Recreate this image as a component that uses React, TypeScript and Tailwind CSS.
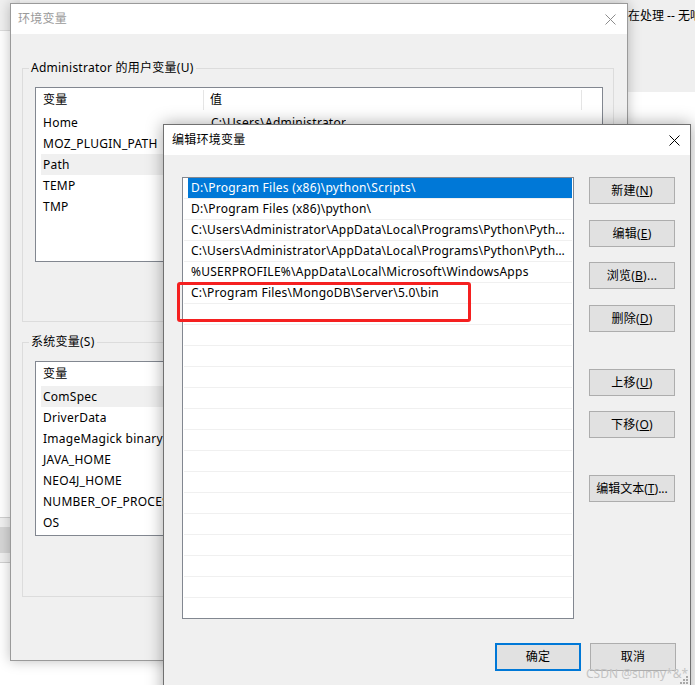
import React from "react";

const userVars = [
  { name: "Home", value: "C:\\Users\\Administrator" },
  { name: "MOZ_PLUGIN_PATH", value: "" },
  { name: "Path", value: "", selected: true },
  { name: "TEMP", value: "" },
  { name: "TMP", value: "" },
];

const systemVars = [
  { name: "ComSpec", value: "", selected: true },
  { name: "DriverData", value: "" },
  { name: "ImageMagick binary", value: "" },
  { name: "JAVA_HOME", value: "" },
  { name: "NEO4J_HOME", value: "" },
  { name: "NUMBER_OF_PROCESSORS", value: "" },
  { name: "OS", value: "" },
];

const paths = [
  "D:\\Program Files (x86)\\python\\Scripts\\",
  "D:\\Program Files (x86)\\python\\",
  "C:\\Users\\Administrator\\AppData\\Local\\Programs\\Python\\Python39\\Scripts\\",
  "C:\\Users\\Administrator\\AppData\\Local\\Programs\\Python\\Python39\\",
  "%USERPROFILE%\\AppData\\Local\\Microsoft\\WindowsApps",
  "C:\\Program Files\\MongoDB\\Server\\5.0\\bin",
];

const CloseIcon = ({ color }: { color: string }) => (
  <svg width="11" height="11" viewBox="0 0 11 11" className="shrink-0">
    <path d="M0.5 0.5 L10.5 10.5 M10.5 0.5 L0.5 10.5" stroke={color} strokeWidth="1" fill="none" />
  </svg>
);

type Var = { name: string; value: string; selected?: boolean };

const VarList = ({ rows }: { rows: Var[] }) => (
  <div className="h-[175px] w-full border border-[#828790] bg-white flex flex-col overflow-hidden">
    <div className="h-[24px] flex items-stretch shrink-0">
      <div className="w-[168px] pl-[7px] flex items-center border-r border-[#e5e5e5] my-[2px]">变量</div>
      <div className="w-[378px] pl-[6px] flex items-center border-r border-[#e5e5e5] my-[2px]">值</div>
    </div>
    <div className="flex flex-col pl-[5px]">
      {rows.map((r) => (
        <div
          key={r.name}
          className={`h-[21px] flex items-center ${r.selected ? "bg-[#f0f0f0]" : ""}`}
        >
          <div className="w-[163px] pl-[2px] whitespace-nowrap overflow-hidden">{r.name}</div>
          <div className="pl-[7px] whitespace-nowrap overflow-hidden">{r.value}</div>
        </div>
      ))}
    </div>
  </div>
);

const WinButton = ({
  label,
  keyChar,
  suffix = "",
  className = "",
}: {
  label: string;
  keyChar?: string;
  suffix?: string;
  className?: string;
}) => (
  <button
    className={`h-[27px] w-[86px] bg-[#e1e1e1] border border-[#adadad] flex items-center justify-center leading-none whitespace-nowrap ${className}`}
  >
    {label}
    {keyChar && (
      <>
        (<u>{keyChar}</u>)
      </>
    )}
    {suffix}
  </button>
);

export default function App() {
  return (
    <div className="relative w-[695px] h-[685px] overflow-hidden bg-white text-[12px] leading-[16px] tracking-[0.25px] text-black font-['Noto_Sans','Noto_Sans_CJK_SC',sans-serif]">
      {/* window behind, top right */}
      <div className="absolute left-[560px] top-0 w-[135px] h-[92px] bg-[#efefef] pl-[56px] pt-[8px] whitespace-nowrap tracking-normal">
        正在处理 -- 无响应
      </div>
      {/* window behind, left edge */}
      <div className="absolute left-0 top-0 w-[20px] h-[31px] bg-[#f0f0f0] border-b border-[#dcdcdc]" />
      <div className="absolute left-0 top-[517px] w-[20px] h-[46px] bg-[#f0f0f0] border-y border-[#d0d0d0] pt-[9px]">
        <div className="h-[26px] bg-[#d6d6d6]" />
      </div>

      {/* 环境变量 */}
      <div className="absolute left-[10px] top-[3px] w-[618px] h-[658px] flex flex-col bg-[#f0f0f0] border border-[#9a9a9a] shadow-[0_0_12px_rgba(0,0,0,0.25)]">
        <div className="h-[30px] shrink-0 bg-white flex items-center justify-between pl-[7px] pr-[11px] text-[#9a9a9a]">
          <span>环境变量</span>
          <CloseIcon color="#8c8c8c" />
        </div>
        <div className="flex flex-col pl-[11px]">
          <fieldset className="mt-[26px] w-[592px] border border-[#dcdcdc] pl-[12px] pr-[10px] pt-[11px] pb-[59px]">
            <legend className="ml-[-6px] px-[2px] leading-[16px]">Administrator 的用户变量(U)</legend>
            <VarList rows={userVars} />
          </fieldset>
          <fieldset className="mt-[12px] w-[592px] border border-[#dcdcdc] pl-[12px] pr-[10px] pt-[11px] pb-[60px]">
            <legend className="ml-[-6px] px-[2px] leading-[16px]">系统变量(S)</legend>
            <VarList rows={systemVars} />
          </fieldset>
        </div>
      </div>

      {/* 编辑环境变量 */}
      <div className="absolute left-[163px] top-[124px] w-[528px] h-[600px] flex flex-col bg-[#f0f0f0] border border-[#707070] shadow-[0_0_16px_rgba(0,0,0,0.35)]">
        <div className="h-[30px] shrink-0 bg-white flex items-center justify-between pl-[8px] pr-[10px]">
          <span>编辑环境变量</span>
          <CloseIcon color="#000000" />
        </div>
        <div className="flex items-start pl-[18px] pt-[22px]">
          <div className="w-[392px] h-[442px] bg-white border border-[#828790] overflow-hidden flex flex-col px-[1px]">
            {Array.from({ length: 21 }).map((_, i) => (
              <div key={i} className="h-[21px] shrink-0 border-b border-[#f0f0f0] flex">
                <div
                  className={`ml-[4px] flex-1 min-w-0 h-[20px] pl-[3px] flex items-center ${
                    i === 0 ? "bg-[#0078d7] text-white" : ""
                  }`}
                >
                  <span className="truncate pr-[4px]">{paths[i] ?? ""}</span>
                </div>
              </div>
            ))}
          </div>
          <div className="ml-[15px] flex flex-col">
            <WinButton label="新建" keyChar="N" />
            <WinButton label="编辑" keyChar="E" className="mt-[16px]" />
            <WinButton label="浏览" keyChar="B" suffix="..." className="mt-[15px]" />
            <WinButton label="删除" keyChar="D" className="mt-[16px]" />
            <WinButton label="上移" keyChar="U" className="mt-[37px]" />
            <WinButton label="下移" keyChar="O" className="mt-[15px]" />
            <WinButton label="编辑文本" keyChar="T" suffix="..." className="mt-[37px] tracking-normal" />
          </div>
        </div>
        <div className="flex justify-end gap-[9px] pr-[14px] mt-[24px]">
          <button className="h-[28px] w-[86px] bg-[#e1e1e1] border-2 border-[#0078d7]">确定</button>
          <button className="h-[28px] w-[86px] bg-[#e1e1e1] border border-[#adadad]">取消</button>
        </div>
      </div>

      {/* annotation */}
      <div className="absolute left-[177px] top-[282px] w-[294px] h-[40px] border-[3px] border-[#f52020] rounded-[3px]" />

      {/* resize grip */}
      <svg className="absolute left-[678px] top-[674px]" width="11" height="11" viewBox="0 0 11 11">
        {[
          [8, 2],
          [5, 5],
          [8, 5],
          [2, 8],
          [5, 8],
          [8, 8],
        ].map(([x, y]) => (
          <rect key={`${x}-${y}`} x={x} y={y} width="2" height="2" fill="#a8a8a8" />
        ))}
      </svg>

      {/* watermark */}
      <div className="absolute left-[586px] top-[666px] text-[12px] text-[#c4c4c4] whitespace-nowrap tracking-normal">
        CSDN @sunny*&amp;*
      </div>
    </div>
  );
}
